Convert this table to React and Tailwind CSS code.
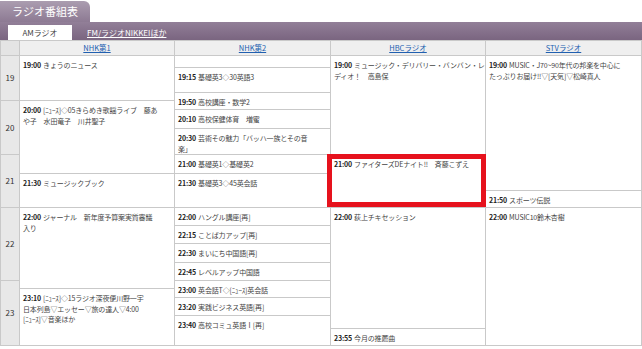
import React from 'react';

const cells = [
  // NHK第1
  { p: 'col-start-2 row-[2/5]', t: '19:00', l: ['きょうのニュース'] },
  { p: 'col-start-2 row-[5/9]', t: '20:00', l: ['[ﾆｭｰｽ]◇05きらめき歌謡ライブ　藤あ', 'や子　水田竜子　川井聖子'] },
  { p: 'col-start-2 row-[9/11]', t: '21:30', l: ['ミュージックブック'] },
  { p: 'col-start-2 row-[11/16]', t: '22:00', l: ['ジャーナル　新年度予算案実質審議', '入り'] },
  { p: 'col-start-2 row-[16/20]', t: '23:10', l: ['[ﾆｭｰｽ]◇15ラジオ深夜便川野一宇', '日本列島▽エッセー▽旅の達人▽4:00', '[ﾆｭｰｽ]▽音楽ほか'] },
  // NHK第2
  { p: 'col-start-3 row-[2/3]', t: '', l: [] },
  { p: 'col-start-3 row-[3/4]', t: '19:15', l: ['基礎英3◇30英語3'] },
  { p: 'col-start-3 row-[4/6]', t: '19:50', l: ['高校講座・数学2'] },
  { p: 'col-start-3 row-[6/7]', t: '20:10', l: ['高校保健体育　増蜜'] },
  { p: 'col-start-3 row-[7/8]', t: '20:30', l: ['芸術その魅力「バッハ一族とその音', '楽」'] },
  { p: 'col-start-3 row-[8/9]', t: '21:00', l: ['基礎英1◇基礎英2'] },
  { p: 'col-start-3 row-[9/11]', t: '21:30', l: ['基礎英3◇45英会話'] },
  { p: 'col-start-3 row-[11/12]', t: '22:00', l: ['ハングル講座[再]'] },
  { p: 'col-start-3 row-[12/13]', t: '22:15', l: ['ことば力アップ[再]'] },
  { p: 'col-start-3 row-[13/14]', t: '22:30', l: ['まいにち中国語[再]'] },
  { p: 'col-start-3 row-[14/15]', t: '22:45', l: ['レベルアップ中国語'] },
  { p: 'col-start-3 row-[15/17]', t: '23:00', l: ['英会話T◇[ﾆｭｰｽ]英会話'] },
  { p: 'col-start-3 row-[17/18]', t: '23:20', l: ['実践ビジネス英語[再]'] },
  { p: 'col-start-3 row-[18/20]', t: '23:40', l: ['高校コミュ英語Ⅰ[再]'] },
  // HBCラジオ
  { p: 'col-start-4 row-[2/8]', t: '19:00', l: ['ミュージック・デリバリー・バンバン・レ', 'ディオ！　高島保'] },
  { p: 'col-start-4 row-[8/11]', t: '21:00', l: ['ファイターズDEナイト!!　斉藤こずえ'] },
  { p: 'col-start-4 row-[11/19]', t: '22:00', l: ['荻上チキセッション'] },
  { p: 'col-start-4 row-[19/20]', t: '23:55', l: ['今月の推薦曲'] },
  // STVラジオ
  { p: 'col-start-5 row-[2/10]', t: '19:00', l: ['MUSIC・J70~90年代の邦楽を中心に', 'たっぷりお届け!!▽[天気]▽松崎真人'] },
  { p: 'col-start-5 row-[10/11]', t: '21:50', l: ['スポーツ伝説'] },
  { p: 'col-start-5 row-[11/20]', t: '22:00', l: ['MUSIC10鈴木杏樹'] },
];

const hours = [
  { p: 'row-[2/5]', h: '19' },
  { p: 'row-[5/8]', h: '20' },
  { p: 'row-[8/11]', h: '21' },
  { p: 'row-[11/15]', h: '22' },
  { p: 'row-[15/20]', h: '23' },
];

const channels = [
  { p: 'col-start-2', n: 'NHK第1' },
  { p: 'col-start-3', n: 'NHK第2' },
  { p: 'col-start-4', n: 'HBCラジオ' },
  { p: 'col-start-5', n: 'STVラジオ' },
];

export default function App() {
  return (
    <div className="w-[642px] h-[349px] bg-white overflow-hidden font-['Noto_Sans_CJK_JP',sans-serif]">
      <div className="h-[22px] flex items-end">
        <div className="w-[90px] h-[21px] rounded-tr-[6px] bg-gradient-to-b from-[#ab9db0] to-[#8d7a93] flex items-center justify-center text-[11px] text-white leading-none pb-px">
          ラジオ番組表
        </div>
      </div>
      <div className="h-[18px] bg-gradient-to-b from-[#927f98] to-[#7a6580] flex items-end">
        <div className="ml-[8px] w-[64px] h-[15px] bg-white flex items-center justify-center text-[8px] text-[#444] leading-none">
          AMラジオ
        </div>
        <a className="ml-[15px] mb-[3px] text-[8px] text-white underline leading-none">FM/ラジオNIKKEIほか</a>
      </div>
      <div className="relative grid grid-cols-[18px_154px_155px_154px_155px] grid-rows-[14px_11px_24px_7px_8px_18px_25px_18px_16px_16px_17px_17px_18px_17px_7px_8px_17px_12px_16px] gap-px bg-[#c9c9c9] p-px">
        <div className="col-start-1 row-start-1 bg-[#e4e4e4]" />
        {channels.map((c) => (
          <div key={c.n} className={`${c.p} row-start-1 bg-[#efefef] flex items-center justify-center`}>
            <a className="text-[7.5px] leading-none text-[#2160b0] underline">{c.n}</a>
          </div>
        ))}
        {hours.map((h) => (
          <div key={h.h} className={`${h.p} col-start-1 bg-[#e8e8e8] flex items-center justify-center text-[8px] text-[#333] leading-none`}>
            {h.h}
          </div>
        ))}
        {cells.map((c, i) => (
          <div key={i} className={`${c.p} bg-white overflow-hidden px-[3px] pt-[4px] text-[7px] leading-[10.5px] text-[#444] whitespace-nowrap tracking-[-0.15px]`}>
            {c.l.map((line, j) => (
              <div key={j}>
                {j === 0 && <span className="font-bold text-[#222] mr-[2px]">{c.t}</span>}
                {line}
              </div>
            ))}
          </div>
        ))}
        <div className="absolute left-[327px] top-[114px] w-[159px] h-[53px] border-[5px] border-[#e6121d]" />
      </div>
    </div>
  );
}
